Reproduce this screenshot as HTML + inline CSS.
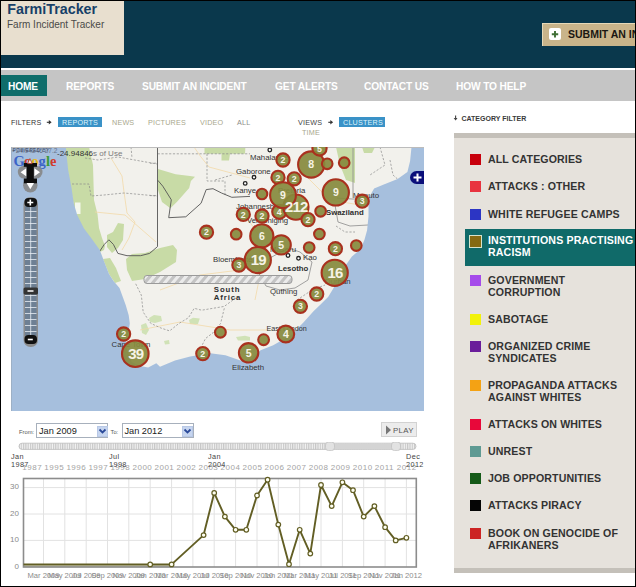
<!DOCTYPE html>
<html><head><meta charset="utf-8">
<style>
*{margin:0;padding:0;box-sizing:border-box}
html,body{width:636px;height:587px;overflow:hidden;background:#000;font-family:"Liberation Sans",sans-serif}
#pg{position:absolute;left:1px;top:1px;width:634px;height:585px;background:#fff;overflow:hidden}
.a{position:absolute;white-space:nowrap}
#hdr{position:absolute;left:0;top:0;width:634px;height:67px;background:#0a384c}
#logo{position:absolute;left:0;top:0;width:123.3px;height:54px;background:#e8dfcf}
#nav{position:absolute;left:0;top:67px;width:634px;height:33px;background:#c5c5c5;border-top:2px solid #fff}
.nv{position:absolute;top:13px;font-size:10.2px;font-weight:bold;color:#fff;letter-spacing:-0.15px}
.flt{position:absolute;font-size:7.2px;letter-spacing:0.2px;color:#333}
#cat{position:absolute;left:453px;top:132px;width:181px;height:440px;background:#e6e2dc;border-top:5px solid #c4c0b9;border-bottom:5px solid #c4c0b9}
.ci{position:absolute;left:0;width:181px;font-size:10.6px;font-weight:bold;color:#333;line-height:12px}
.ci .sw{position:absolute;left:16px;top:0;width:11px;height:11px}
.ci .tx{position:absolute;left:34px;top:-1px;letter-spacing:0.12px}
</style></head><body>
<div id="pg">
 <div id="hdr">
  <div id="logo">
   <div class="a" style="left:6.3px;top:-0.2px;font-size:14.3px;font-weight:bold;color:#173f68">FarmiTracker</div>
   <div class="a" style="left:6px;top:18px;font-size:10px;color:#4a4a48">Farm Incident Tracker</div>
  </div>
  <div class="a" style="left:541px;top:21.5px;width:100px;height:23px;background:#c9b48a;border-top:1px solid #e6d9b8;border-left:1px solid #e6d9b8"></div>
  <div class="a" style="left:548px;top:27px;width:12px;height:12px;background:#fff;border-radius:2px"></div>
  <svg class="a" style="left:548px;top:27px" width="12" height="12" viewBox="0 0 12 12"><path d="M2.8,6.2 H9.2 M6,3 V9.4" stroke="#3f6f35" stroke-width="1.9"/></svg>
  <div class="a" style="left:567px;top:27px;font-size:10.5px;font-weight:bold;color:#1a1712">SUBMIT AN INCIDENT</div>
 </div>
 <div id="nav">
  <div class="a" style="left:0;top:5px;width:46px;height:21px;background:#0f6d6b"></div>
  <div class="nv" style="left:7px;top:10.5px">HOME</div>
  <div class="nv" style="left:65px;top:10.5px">REPORTS</div>
  <div class="nv" style="left:141px;top:10.5px">SUBMIT AN INCIDENT</div>
  <div class="nv" style="left:274px;top:10.5px">GET ALERTS</div>
  <div class="nv" style="left:363px;top:10.5px">CONTACT US</div>
  <div class="nv" style="left:455px;top:10.5px">HOW TO HELP</div>
 </div>

 <div class="flt" style="left:10px;top:116.6px">FILTERS</div>
 <svg class="a" style="left:45px;top:118px" width="8" height="7" viewBox="46 119 8 7"><path d="M46.8,122.3 H49.5" stroke="#333" stroke-width="1.1"/><path d="M48.8,120 L51.6,122.3 L48.8,124.6 Z" fill="#333"/></svg>
 <div class="a" style="left:57px;top:116px;width:44px;height:10px;background:#3a92c7"></div>
 <div class="flt" style="left:61px;top:116.5px;color:#dff4fc">REPORTS</div>
 <div class="flt" style="left:111px;top:116.6px;color:#a9a78d">NEWS</div>
 <div class="flt" style="left:147px;top:116.6px;color:#a9a78d">PICTURES</div>
 <div class="flt" style="left:199px;top:116.6px;color:#a9a78d">VIDEO</div>
 <div class="flt" style="left:236px;top:116.6px;color:#8e8e8a">ALL</div>
 <div class="flt" style="left:297px;top:116.6px;color:#444">VIEWS</div>
 <svg class="a" style="left:327px;top:118px" width="8" height="7" viewBox="328 119 8 7"><path d="M328.3,122.3 H331" stroke="#333" stroke-width="1.1"/><path d="M330.3,120 L333.1,122.3 L330.3,124.6 Z" fill="#333"/></svg>
 <div class="a" style="left:338px;top:116px;width:46px;height:10px;background:#3a92c7"></div>
 <div class="flt" style="left:342px;top:116.5px;color:#dff4fc">CLUSTERS</div>
 <div class="flt" style="left:301px;top:127px;color:#a9a78d">TIME</div>
 <svg class="a" style="left:452px;top:114px" width="7" height="8" viewBox="453 115 7 8"><path d="M455.6,115.5 V118.5" stroke="#444" stroke-width="1.1"/><path d="M453.7,118 L457.5,118 L455.6,120.6 Z" fill="#444"/></svg>
 <div class="flt" style="left:460.5px;top:113.5px;color:#3a3a3a;font-weight:bold;font-size:7px;letter-spacing:0">CATEGORY FILTER</div>
 <svg class="a" style="left:10px;top:146px" width="413" height="264" viewBox="11 147 413 264">
  <rect x="11" y="147" width="413" height="264" fill="#f2f1ec"/>
  <!-- green areas -->
  <g fill="#c8dba6">
  <path d="M64,147 L89,147 L93,165 L94,200 L97.5,214 L99,228 L102,238 L105,246 L104,250 L100,252 L96,246 L88,236 L80,226 L75,212 L71,190 L67,166 Z"/>
  <path d="M107,235 L113,232 L118,223 L124,224 L123,240 L118,248 L112,253 L107,247 Z"/>
  <path d="M158,169 L175.6,174.3 L190,176 L195,176.8 L190.9,181 L189.2,187.9 L177.3,201.5 L170.4,208.3 L162,202 L158,190 Z"/>
  <path d="M126,259 L132,254 L145,253 L160,248 L173,245 L177,250 L176,262 L160,272 L145,279 L132,281 L127,270 Z"/>
  <path d="M103,259 L110,258 L116,268 L121,281 L115,283 L109,274 Z"/>
  <path d="M204.5,147 L245.4,147 L245,153.8 L230,153.8 L229,160.6 L221.5,160.6 L221.5,153.8 L204.5,153.8 Z"/>
  <path d="M336,147 L355,147 L355,183 L346,180 L340,165 Z"/>
  <path d="M362,147 L375,147 L372,153 L364,153 Z"/>
  <path d="M149,318 L154,315 L161,316 L162,321 L155,323 L150,322 Z" fill="#d0e2b6"/>
  <path d="M189,320 L193,317.7 L199.8,318.5 L198,324 L190,324 Z" fill="#d0e2b6"/>
  <path d="M141,325 L146,323 L149,330 L146,335 L142,333 Z" fill="#d0e2b6"/>
  <path d="M164,341 L169,340 L169.6,344 L165,344.5 Z" fill="#d0e2b6"/>
  <path d="M236,337 L245,335.7 L250,337 L250,340.4 L238,340.4 Z" fill="#d0e2b6"/>
  <path d="M300,327 L308,326 L306,333 L299,333 Z"/>
  </g>
  <path fill="#fff" d="M75,202.5 L80.5,202.5 L80.5,214 L75,214 Z" opacity="0.8"/>
  <!-- roads -->
  <path fill="none" stroke="#f2d9a8" stroke-width="0.8" d="M111,158 L122,176 L124,192 L127,213 L135,222 L129,238 L122,250 M95,212 L125,215 L156,242 M194,147 L201,157 L209,167 L250,178 M245,215 L262,240 L260,275 L255,300 M140,330 L180,322 L230,330 L270,330 M160,290 L200,275 L240,270 M300,170 L330,200 L360,205"/>
  <!-- dashed borders -->
  <path fill="none" stroke="#8a8a8a" stroke-width="0.7" stroke-dasharray="2.2,1.6" d="M72,184 L89,184 L91,196 L104,195 L124,193 L157,196 M85,158 L98,160 L118,157 L157,164 M131,147 L132,158 M157.7,153.8 L250,153.8 M207,153.8 L207,181 L225,181 L225,196.4 M150,163.2 L157.7,163.2 M150,195.6 L157.7,195.6 M135.7,283.8 L141.3,295.1 L143.2,312.1 L150.8,323.4 L161.1,328.1 L169.6,330.9 L179,323.4 L188.5,317.7 L194.2,308.3 L201.7,310.2 L213,308.3 L224.3,306.4 L231.9,300.8 L237.5,297 M224.3,308.3 L220.6,323.4 L213,332.8 L205.5,338.5 L201.7,346 M390,160 L393,175 L402,183 M336,226 L345,232 L355,232 M297,300 L312,290 L325,285 M215,180 L232,175 M380,147 L385,165 L370,175"/>
  <!-- national borders -->
  <path fill="none" stroke="#555" stroke-width="0.9" d="M157.5,147 L157.5,246.6 L149.6,253.4 L140.6,255.7 L127,255.7 L117.9,253.4 L113.4,244.4 L108.9,239.8 L104.3,244.4 L99.8,251.1"/>
  <path fill="none" stroke="#555" stroke-width="0.9" d="M157.7,180.2 L162.8,186.2 L171.3,199.8 L168.7,217.7 L185.8,216.8 L201.1,203.2 L206.2,189.6 L213,188.7 L221.5,193 L231.8,197.3 L250,196.4"/>
  <path fill="none" stroke="#8c8c8c" stroke-width="0.8" d="M353,147 L353,198 M337,198 L352,199 L368,199 M335,205 L338,222 L350,226 L368,225 M258,272 L270,258 L288,248 L300,252 L312,262 L308,280 L295,288 L280,290 L266,286 Z "/>
  <!-- sea -->
  <path fill="#a6bfdd" d="M11,147 L65.8,147 L68.1,169.6 L71.5,187.8 L73.8,203.6 L77.2,214.9 L84,228.5 L90.8,237.6 L99.8,250 L104.3,262 L109,274 L113.5,281 L119.5,288 L125.7,305 L128.7,315.2 L129.8,323.4 L128.7,330.6 L125.7,339.8 L127,350 L131.8,362 L140,366 L148.2,367.4 L156.3,363.3 L160,366.7 L175,360.4 L190.2,356.6 L210.3,353.3 L225.4,355.3 L240.5,360.4 L250.6,359.1 L260.6,350.3 L273.2,345.3 L290.8,335.2 L303.4,322.6 L313.5,311.3 L320,305 L328.3,296.8 L336.6,282.9 L345,266.2 L351.9,256.5 L360.2,249.6 L364.4,239.9 L367.1,230.2 L368.5,216.3 L368.5,198.3 L374.1,188.6 L383.8,184.4 L397.6,178.9 L407.4,172 L410.1,160.9 L411.5,147 L424,147 L424,411 L11,411 Z"/>
  <g font-family="Liberation Sans" fill="#333" font-size="7.8">
   <text x="250" y="160">Mahalapye</text>
   <text x="236" y="173.5">Gaborone</text>
   <text x="234" y="193">Kanye</text>
   <text x="278" y="193">Pretoria</text>
   <text x="236" y="208.5">Johannesburg</text>
   <text x="247" y="223">Vereeniging</text>
   <text x="353" y="198">Maputo</text>
   <text x="213" y="261.5">Bloemfontein</text>
   <text x="270" y="251.5">Maseru</text>
   <text x="303" y="260">Kao</text>
   <text x="270" y="293.6">Quthing</text>
   <text x="325" y="283.5">Durban</text>
   <text x="111.5" y="347">Cape Town</text>
   <text x="266.5" y="330.5" font-size="7.2">East London</text>
   <text x="232" y="370">Elizabeth</text>
  </g>
  <g font-family="Liberation Sans" fill="#2e2e2e" font-size="7.8" font-weight="bold">
   <text x="326" y="214.5">Swaziland</text>
   <text x="278" y="270.7">Lesotho</text>
   <text x="213.8" y="291.8" letter-spacing="0.9">South</text>
   <text x="213.8" y="300.4" letter-spacing="0.9">Africa</text>
  </g>
  <g fill="#fff" stroke="#222" stroke-width="1.3">
   <circle cx="269.8" cy="150" r="1.8"/><circle cx="254" cy="177.3" r="1.8"/><circle cx="245.2" cy="183.4" r="1.8"/>
   <circle cx="288" cy="255.5" r="1.8"/><circle cx="298.5" cy="258.3" r="1.8"/>
  </g>


  <rect x="11" y="147" width="413" height="1" fill="#bcbcbc"/>
  <rect x="11" y="147" width="1" height="264" fill="#9aa9bb" opacity="0.7"/>
  <!-- progress bar -->
  <g>
   <defs><pattern id="strp" width="8" height="9" patternUnits="userSpaceOnUse" patternTransform="skewX(-40)"><rect width="8" height="9" fill="#c4c4c4"/><rect width="4" height="9" fill="#ebebeb"/></pattern></defs>
   <rect x="144" y="275.5" width="148" height="8" rx="3" fill="url(#strp)" stroke="#9a9a9a" stroke-width="1"/>
  </g>
  <!-- + button right -->
  <path d="M424,171 L416.5,171 A6.5,6.5 0 0 0 416.5,184 L424,184 Z" fill="#0a0f7a"/>
  <path d="M417,177.5 h8 M421,173.5 v8" stroke="#fff" stroke-width="2" transform="translate(-3.5,0)"/>
  <!-- attribution -->
  <text x="12.5" y="151.5" font-family="Liberation Sans" font-size="5.2" fill="#4a5470" letter-spacing="0.2">POWERED BY</text><text x="12" y="153" font-family="Liberation Sans" font-size="6.5" fill="#3a4050" opacity="0.6">+24.94246 27.2</text>
  <text x="57" y="155.5" font-family="Liberation Sans" font-size="8" fill="#333">-24.94846</text>
  <text x="93" y="155.5" font-family="Liberation Sans" font-size="8" fill="#7a7a7a">s of Use</text>
  <g font-family="Liberation Serif" font-weight="bold" font-size="14.5">
   <text x="13.5" y="165.5" fill="#3b64c8">G</text><text x="24" y="165.5" fill="#d03b2a">o</text><text x="31.5" y="165.5" fill="#e8b81a">o</text><text x="38.5" y="165.5" fill="#3b64c8">g</text><text x="46" y="165.5" fill="#3a9a3a">l</text><text x="50" y="165.5" fill="#d03b2a">e</text>
  </g>
  <!-- pan control -->
  <rect x="17.8" y="165.7" width="24.7" height="12.8" rx="6.4" fill="#868686" opacity="0.9"/>
  <circle cx="30.3" cy="185.3" r="7.2" fill="#868686" opacity="0.9"/>
  <rect x="23.8" y="163" width="13.2" height="3.8" fill="#0d0d0d"/>
  <rect x="26.6" y="163" width="7.2" height="20" fill="#0d0d0d"/>
  <rect x="23.8" y="178.5" width="13.2" height="4.8" fill="#0d0d0d"/>
  <path d="M20.6,172.2 L26.2,168.2 L26.2,176.2 Z M40,172.2 L34.4,168.2 L34.4,176.2 Z" fill="#fff"/>
  <path d="M26.6,183 L34,183 L30.3,189.2 Z" fill="#fff"/>
  <path d="M27.6,163.6 L32.2,163.6 L29.9,158.6 Z" fill="#f4e8e0" stroke="#b03a2a" stroke-width="0.8"/>
  <!-- zoom slider -->
  <rect x="23.5" y="197" width="14.5" height="150" rx="7" fill="#8c8c8c"/>
  <rect x="25" y="206" width="11.5" height="130" fill="#6e8094"/>
  <g stroke="#e8eef4" stroke-width="0.8">
   <path d="M30.7,206 V336"/>
   <path d="M25,211.5 H36.5 M25,217.5 H36.5 M25,223.5 H36.5 M25,229.5 H36.5 M25,235.5 H36.5 M25,241.5 H36.5 M25,247.5 H36.5 M25,253.5 H36.5 M25,259.5 H36.5 M25,265.5 H36.5 M25,271.5 H36.5 M25,277.5 H36.5 M25,283.5 H36.5 M25,289.5 H36.5 M25,295.5 H36.5 M25,301.5 H36.5 M25,307.5 H36.5 M25,313.5 H36.5 M25,319.5 H36.5 M25,325.5 H36.5 M25,331.5 H36.5"/>
  </g>
  <rect x="24.5" y="198" width="12.5" height="9" rx="4" fill="#111"/>
  <path d="M27.3,202.5 h6 M30.3,199.5 v6" stroke="#fff" stroke-width="1.6"/>
  <rect x="24.5" y="335" width="12.5" height="9" rx="4" fill="#111"/>
  <path d="M27.8,339.5 h5" stroke="#fff" stroke-width="1.6"/>
  <rect x="23.5" y="287.5" width="14.5" height="7" rx="1.5" fill="#333"/>
  <path d="M27.5,291 h6" stroke="#fff" stroke-width="1.5"/>
  <g fill="#878a3d" fill-opacity="0.92" stroke="#a9311e" stroke-width="2.1"><circle cx="283" cy="160" r="6.6"/>
<circle cx="311.2" cy="164.5" r="13.1"/>
<circle cx="319.5" cy="148.5" r="7.1"/>
<circle cx="327.2" cy="163.8" r="5.3"/>
<circle cx="344.2" cy="162.7" r="5.3"/>
<circle cx="278" cy="177.4" r="6.6"/>
<circle cx="294.2" cy="178.8" r="6.6"/>
<circle cx="262" cy="194" r="5.3"/>
<circle cx="279.3" cy="211.8" r="7.1"/>
<circle cx="295.9" cy="207.1" r="12.6"/>
<circle cx="283" cy="195.2" r="12.9"/>
<circle cx="335.8" cy="192.4" r="13.1"/>
<circle cx="362.2" cy="201.2" r="6.6"/>
<circle cx="243.3" cy="214.4" r="6.6"/>
<circle cx="262" cy="216" r="6.6"/>
<circle cx="320.6" cy="211.3" r="5.3"/>
<circle cx="308" cy="219.6" r="6.6"/>
<circle cx="236.2" cy="234.2" r="5.3"/>
<circle cx="206.5" cy="232.2" r="6.6"/>
<circle cx="261.8" cy="235.9" r="11.6"/>
<circle cx="319.4" cy="234" r="5.3"/>
<circle cx="281.2" cy="244.9" r="9.6"/>
<circle cx="309.2" cy="247.5" r="5.3"/>
<circle cx="335.4" cy="248.7" r="6.6"/>
<circle cx="356.3" cy="245.6" r="5.3"/>
<circle cx="257.8" cy="260" r="13.1"/>
<circle cx="238.9" cy="265" r="6.6"/>
<circle cx="334.7" cy="272.8" r="13.1"/>
<circle cx="316.7" cy="294" r="6.6"/>
<circle cx="300.4" cy="306.3" r="6.6"/>
<circle cx="220.4" cy="332.2" r="5.4"/>
<circle cx="285.8" cy="334" r="8.4"/>
<circle cx="263.6" cy="339.7" r="5.4"/>
<circle cx="248.6" cy="352.8" r="9.7"/>
<circle cx="202.8" cy="353.6" r="6.6"/>
<circle cx="123.6" cy="334" r="6.6"/>
<circle cx="135.3" cy="353.7" r="13.3"/></g>
  <g fill="#f6f3e6" font-weight="bold" text-anchor="middle" font-family="Liberation Sans"><text x="283" y="163.17" font-size="8.8">2</text>
<text x="311.2" y="168.28" font-size="10.5">8</text>
<text x="319.5" y="151.67" font-size="8.8">5</text>
<text x="278" y="180.57" font-size="8.8">2</text>
<text x="294.2" y="181.97" font-size="8.8">2</text>
<text x="279.3" y="214.97" font-size="8.8">4</text>
<text x="296.3" y="212.40" font-size="15" letter-spacing="-0.8">212</text>
<text x="283" y="198.98" font-size="10.5">9</text>
<text x="335.8" y="196.18" font-size="10.5">9</text>
<text x="362.2" y="204.37" font-size="8.8">3</text>
<text x="243.3" y="217.57" font-size="8.8">2</text>
<text x="262" y="219.17" font-size="8.8">2</text>
<text x="308" y="222.77" font-size="8.8">2</text>
<text x="206.5" y="235.37" font-size="8.8">2</text>
<text x="261.8" y="239.68" font-size="10.5">6</text>
<text x="281.2" y="248.68" font-size="10.5">5</text>
<text x="335.4" y="251.87" font-size="8.8">2</text>
<text x="258.2" y="265.30" font-size="15" letter-spacing="-0.8">19</text>
<text x="238.9" y="268.17" font-size="8.8">3</text>
<text x="335.1" y="278.08" font-size="15" letter-spacing="-0.8">16</text>
<text x="316.7" y="297.17" font-size="8.8">2</text>
<text x="300.4" y="309.47" font-size="8.8">3</text>
<text x="285.8" y="337.78" font-size="10.5">4</text>
<text x="248.6" y="356.58" font-size="10.5">5</text>
<text x="202.8" y="356.77" font-size="8.8">2</text>
<text x="123.6" y="337.17" font-size="8.8">2</text>
<text x="135.7" y="359.00" font-size="15" letter-spacing="-0.8">39</text></g>
 </svg>

 <!-- timeline -->
 <div class="a" style="left:18px;top:428px;font-size:5.8px;color:#555">From:</div>
 <div class="a" style="left:35px;top:422px;width:72px;height:15px;background:#fff;border:1px solid #a7b0bc"></div>
 <div class="a" style="left:38px;top:424.5px;font-size:9.2px;color:#1a1a1a">Jan 2009</div>
 <div class="a" style="left:95.5px;top:424.5px;width:11px;height:11px;background:#c6d5ef;border:1px solid #b8c8e6"></div>
 <svg class="a" style="left:97px;top:427px" width="9" height="7" viewBox="0 0 9 7"><path d="M1.5,1.5 L4.5,4.5 L7.5,1.5" fill="none" stroke="#2b4a9a" stroke-width="1.8"/></svg>
 <div class="a" style="left:109.5px;top:428px;font-size:5.8px;color:#555">To:</div>
 <div class="a" style="left:120.5px;top:422px;width:72px;height:15px;background:#fff;border:1px solid #a7b0bc"></div>
 <div class="a" style="left:123.5px;top:424.5px;font-size:9.2px;color:#1a1a1a">Jan 2012</div>
 <div class="a" style="left:180.5px;top:424.5px;width:11px;height:11px;background:#c6d5ef;border:1px solid #b8c8e6"></div>
 <svg class="a" style="left:182px;top:427px" width="9" height="7" viewBox="0 0 9 7"><path d="M1.5,1.5 L4.5,4.5 L7.5,1.5" fill="none" stroke="#2b4a9a" stroke-width="1.8"/></svg>
 <div class="a" style="left:380px;top:421px;width:36px;height:15px;background:#ececec;border:1px solid #d2d2d2"></div>
 <svg class="a" style="left:384px;top:424px" width="7" height="10" viewBox="0 0 7 10"><path d="M1,0.5 L6,5 L1,9.5 Z" fill="#777"/></svg>
 <div class="a" style="left:392px;top:424.5px;font-size:7.8px;letter-spacing:0.4px;color:#555">PLAY</div>
 <svg class="a" style="left:17px;top:441px" width="400" height="9" viewBox="18 442 400 9">
  <defs><pattern id="tick" x="0" y="0" width="2.3" height="9" patternUnits="userSpaceOnUse"><rect width="2.3" height="9" fill="#f2f2f2"/><rect width="1.2" height="9" fill="#c8c8c8"/></pattern></defs>
  <rect x="19" y="443.2" width="397" height="6.2" rx="3.1" fill="url(#tick)" stroke="#bbb" stroke-width="0.8"/>
  <rect x="330" y="443.2" width="66" height="6.2" fill="#d4d4d4"/>
  <rect x="325.5" y="442" width="9" height="8.6" rx="3" fill="#e2e2e2" stroke="#c2c2c2" stroke-width="0.8"/>
  <rect x="391.5" y="442" width="9" height="8.6" rx="3" fill="#e2e2e2" stroke="#c2c2c2" stroke-width="0.8"/>
 </svg>
 <div class="a" style="left:21.3px;top:461.5px;font-size:8px;letter-spacing:0.5px;color:#a4a4a4">1987</div><div class="a" style="left:43.3px;top:461.5px;font-size:8px;letter-spacing:0.5px;color:#a4a4a4">1995</div><div class="a" style="left:65.4px;top:461.5px;font-size:8px;letter-spacing:0.5px;color:#a4a4a4">1996</div><div class="a" style="left:87.4px;top:461.5px;font-size:8px;letter-spacing:0.5px;color:#a4a4a4">1997</div><div class="a" style="left:109.4px;top:461.5px;font-size:8px;letter-spacing:0.5px;color:#a4a4a4">1998</div><div class="a" style="left:131.5px;top:461.5px;font-size:8px;letter-spacing:0.5px;color:#a4a4a4">2000</div><div class="a" style="left:153.5px;top:461.5px;font-size:8px;letter-spacing:0.5px;color:#a4a4a4">2001</div><div class="a" style="left:175.5px;top:461.5px;font-size:8px;letter-spacing:0.5px;color:#a4a4a4">2002</div><div class="a" style="left:197.5px;top:461.5px;font-size:8px;letter-spacing:0.5px;color:#a4a4a4">2003</div><div class="a" style="left:219.6px;top:461.5px;font-size:8px;letter-spacing:0.5px;color:#a4a4a4">2004</div><div class="a" style="left:241.6px;top:461.5px;font-size:8px;letter-spacing:0.5px;color:#a4a4a4">2005</div><div class="a" style="left:263.6px;top:461.5px;font-size:8px;letter-spacing:0.5px;color:#a4a4a4">2006</div><div class="a" style="left:285.7px;top:461.5px;font-size:8px;letter-spacing:0.5px;color:#a4a4a4">2007</div><div class="a" style="left:307.7px;top:461.5px;font-size:8px;letter-spacing:0.5px;color:#a4a4a4">2008</div><div class="a" style="left:329.7px;top:461.5px;font-size:8px;letter-spacing:0.5px;color:#a4a4a4">2009</div><div class="a" style="left:351.8px;top:461.5px;font-size:8px;letter-spacing:0.5px;color:#a4a4a4">2010</div><div class="a" style="left:373.8px;top:461.5px;font-size:8px;letter-spacing:0.5px;color:#a4a4a4">2011</div><div class="a" style="left:395.8px;top:461.5px;font-size:8px;letter-spacing:0.5px;color:#a4a4a4">2012</div>
 <div class="a" style="left:10px;top:452px;font-size:7.3px;letter-spacing:0.4px;line-height:8px;color:#444">Jan<br>1987</div>
 <div class="a" style="left:108px;top:452px;font-size:7.3px;letter-spacing:0.4px;line-height:8px;color:#444">Jul<br>1998</div>
 <div class="a" style="left:207px;top:452px;font-size:7.3px;letter-spacing:0.4px;line-height:8px;color:#444">Jan<br>2004</div>
 <div class="a" style="left:405px;top:452px;font-size:7.3px;letter-spacing:0.4px;line-height:8px;color:#444">Dec<br>2012</div>

 <svg class="a" style="left:-1px;top:469px" width="636" height="118" viewBox="0 470 636 118">
  <path d="M43.5,478.5 V567 M64.8,478.5 V567 M86.2,478.5 V567 M107.5,478.5 V567 M128.8,478.5 V567 M150.2,478.5 V567 M171.6,478.5 V567 M192.9,478.5 V567 M214.2,478.5 V567 M235.6,478.5 V567 M257.0,478.5 V567 M278.3,478.5 V567 M299.7,478.5 V567 M321.0,478.5 V567 M342.4,478.5 V567 M363.7,478.5 V567 M385.1,478.5 V567 M406.4,478.5 V567 M23,540.4 H417 M23,514.0 H417 M23,487.6 H417 " stroke="#e2e2e2" stroke-width="1" fill="none"/>
  <rect x="23.5" y="565" width="148" height="2.3" fill="#b9b79a"/>
  <rect x="23.5" y="478.5" width="392.8" height="88.5" fill="none" stroke="#8c8c8c" stroke-width="1.6"/>
  <polyline points="23.5,564.4 150.2,564.4 171.6,564.4 203.6,535.1 214.2,492.9 224.9,516.6 235.6,529.8 246.3,529.8 257.0,495.5 267.6,479.7 278.3,524.6 289.0,564.2 299.7,529.8 310.3,553.6 321.0,485.0 331.7,506.1 342.4,482.3 353.0,490.2 363.7,516.6 374.4,506.1 385.1,527.2 395.7,540.4 406.4,537.8" fill="none" stroke="#625e24" stroke-width="1.9" stroke-linejoin="round"/>
  <g fill="#fffff2" stroke="#625e24" stroke-width="1.2"><circle cx="150.2" cy="564.4" r="2.3"/><circle cx="171.6" cy="564.4" r="2.3"/><circle cx="203.6" cy="535.1" r="2.3"/><circle cx="214.2" cy="492.9" r="2.3"/><circle cx="224.9" cy="516.6" r="2.3"/><circle cx="235.6" cy="529.8" r="2.3"/><circle cx="246.3" cy="529.8" r="2.3"/><circle cx="257.0" cy="495.5" r="2.3"/><circle cx="267.6" cy="479.7" r="2.3"/><circle cx="278.3" cy="524.6" r="2.3"/><circle cx="289.0" cy="564.2" r="2.3"/><circle cx="299.7" cy="529.8" r="2.3"/><circle cx="310.3" cy="553.6" r="2.3"/><circle cx="321.0" cy="485.0" r="2.3"/><circle cx="331.7" cy="506.1" r="2.3"/><circle cx="342.4" cy="482.3" r="2.3"/><circle cx="353.0" cy="490.2" r="2.3"/><circle cx="363.7" cy="516.6" r="2.3"/><circle cx="374.4" cy="506.1" r="2.3"/><circle cx="385.1" cy="527.2" r="2.3"/><circle cx="395.7" cy="540.4" r="2.3"/><circle cx="406.4" cy="537.8" r="2.3"/></g>
  <g font-family="Liberation Sans" font-size="8" fill="#8a8a8a" text-anchor="end">
   <text x="18.9" y="489.2">30</text><text x="18.9" y="515.6">20</text><text x="18.9" y="542">10</text><text x="18.9" y="568.6">0</text>
  </g>
  <g font-family="Liberation Sans" font-size="7.6" fill="#8c8c8c" text-anchor="middle"><text x="43.5" y="577.5">Mar 2009</text><text x="64.8" y="577.5">May 2009</text><text x="86.2" y="577.5">Jul 2009</text><text x="107.5" y="577.5">Sep 2009</text><text x="128.8" y="577.5">Nov 2009</text><text x="150.2" y="577.5">Jan 2010</text><text x="171.6" y="577.5">Mar 2010</text><text x="192.9" y="577.5">May 2010</text><text x="214.2" y="577.5">Jul 2010</text><text x="235.6" y="577.5">Sep 2010</text><text x="257.0" y="577.5">Nov 2010</text><text x="278.3" y="577.5">Jan 2011</text><text x="299.7" y="577.5">Mar 2011</text><text x="321.0" y="577.5">May 2011</text><text x="342.4" y="577.5">Jul 2011</text><text x="363.7" y="577.5">Sep 2011</text><text x="385.1" y="577.5">Nov 2011</text><text x="406.4" y="577.5">Jan 2012</text></g>
 </svg>

 <div id="cat">
  <div class="ci" style="top:16px"><div class="sw" style="background:#c8000c"></div><div class="tx">ALL CATEGORIES</div></div>
  <div class="ci" style="top:43px"><div class="sw" style="background:#e8333f"></div><div class="tx">ATTACKS : OTHER</div></div>
  <div class="ci" style="top:71px"><div class="sw" style="background:#2c35c4"></div><div class="tx">WHITE REFUGEE CAMPS</div></div>
  <div class="ci" style="top:91px;left:11px;width:170px;height:37px;background:#106a69"></div>
  <div class="ci" style="top:97px;color:#fff"><div class="sw" style="background:#856a12;border:1px solid #d6e4cc;left:15px;width:13px;height:13px"></div><div class="tx" style="letter-spacing:0.15px">INSTITUTIONS PRACTISING<br>RACISM</div></div>
  <div class="ci" style="top:137px"><div class="sw" style="background:#a54bea"></div><div class="tx">GOVERNMENT<br>CORRUPTION</div></div>
  <div class="ci" style="top:176px"><div class="sw" style="background:#f2f20a"></div><div class="tx">SABOTAGE</div></div>
  <div class="ci" style="top:203px"><div class="sw" style="background:#6a1d9a"></div><div class="tx">ORGANIZED CRIME<br>SYNDICATES</div></div>
  <div class="ci" style="top:242px"><div class="sw" style="background:#f4a214"></div><div class="tx">PROPAGANDA ATTACKS<br>AGAINST WHITES</div></div>
  <div class="ci" style="top:281px"><div class="sw" style="background:#e8083a"></div><div class="tx">ATTACKS ON WHITES</div></div>
  <div class="ci" style="top:308px"><div class="sw" style="background:#5f9a93"></div><div class="tx">UNREST</div></div>
  <div class="ci" style="top:335px"><div class="sw" style="background:#155a18"></div><div class="tx">JOB OPPORTUNITIES</div></div>
  <div class="ci" style="top:362px"><div class="sw" style="background:#050505"></div><div class="tx">ATTACKS PIRACY</div></div>
  <div class="ci" style="top:390px"><div class="sw" style="background:#cc2424"></div><div class="tx">BOOK ON GENOCIDE OF<br>AFRIKANERS</div></div>
 </div>
</div>
</body></html>
